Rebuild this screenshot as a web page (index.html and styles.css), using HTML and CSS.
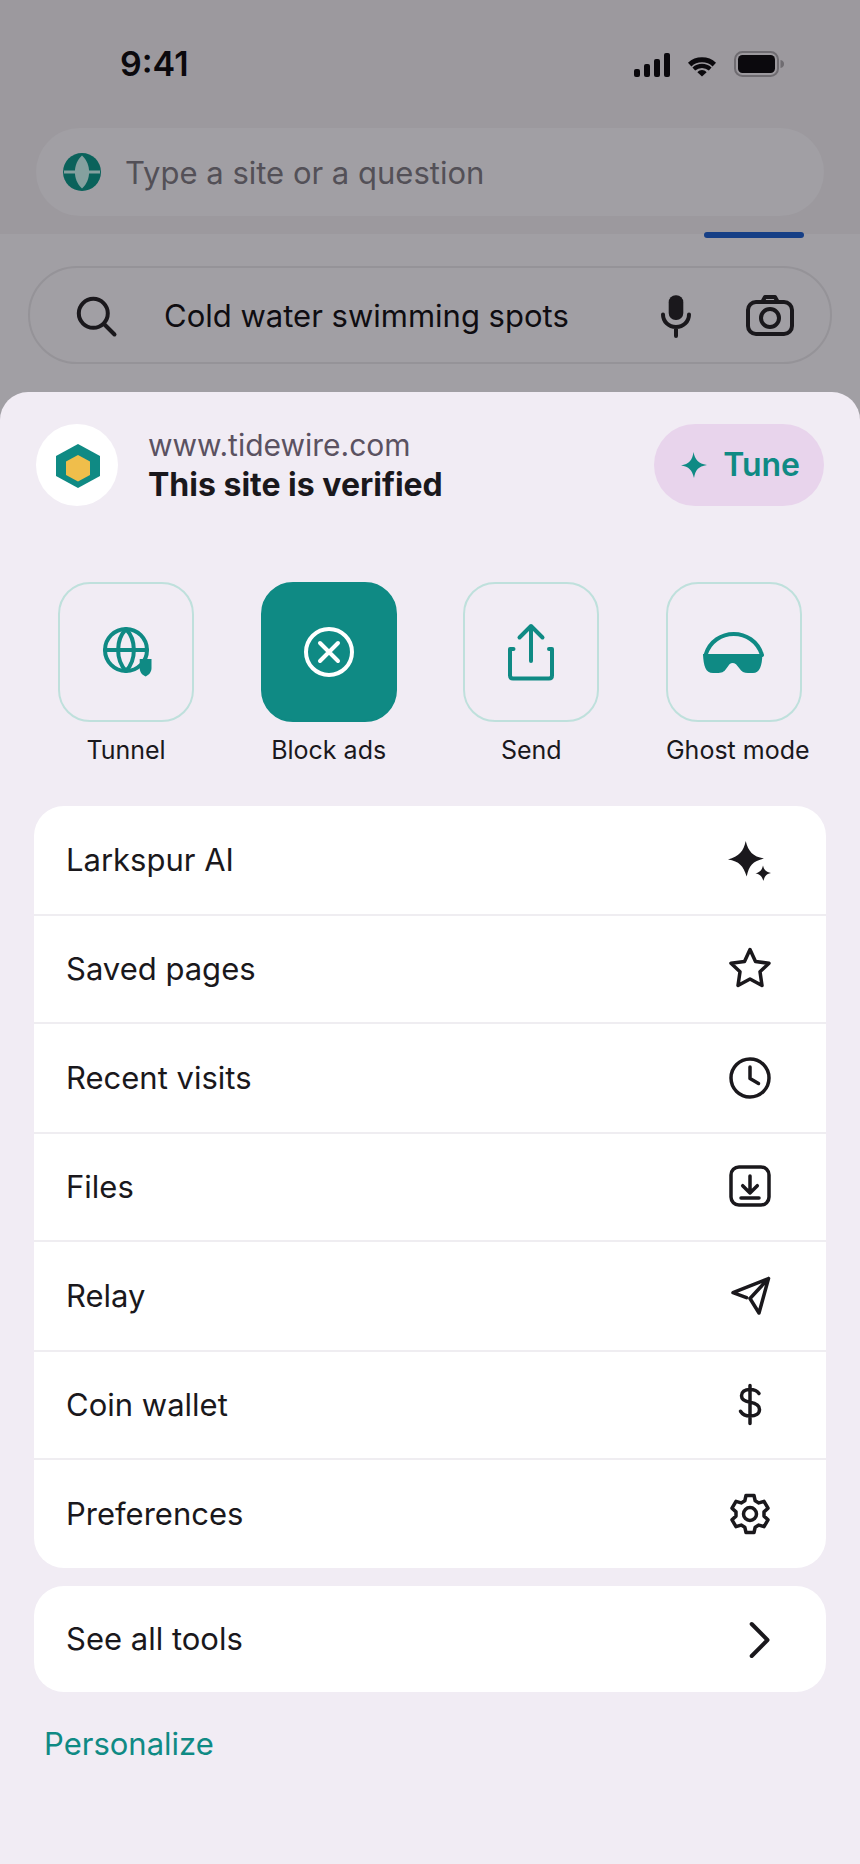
FILE: index.html
```html
<!DOCTYPE html>
<html lang="en">
<head>
<meta charset="utf-8">
<meta name="viewport" content="width=device-width, initial-scale=1">
<title>Browser menu</title>
<link rel="stylesheet" href="styles.css">
</head>
<body>
<header class="top">
  <div class="status">
    <time class="clock">9:41</time>
    <div class="signals">
      <svg width="36" height="26" viewBox="0 0 36 26" fill="currentColor" aria-hidden="true">
        <rect y="18" width="6" height="8" rx="2"/><rect x="10" y="13" width="6" height="13" rx="2"/><rect x="20" y="8" width="6" height="18" rx="2"/><rect x="30" y="2" width="6" height="24" rx="2"/>
      </svg>
      <svg width="28" height="26" viewBox="0 0 28 26" fill="none" stroke="currentColor" stroke-width="5" aria-hidden="true">
        <path d="M1.700 13.600C8.500 7.200 19.500 7.200 26.300 13.600"/><path d="M5.800 18C10.600 13.900 17.400 13.900 22.200 18" stroke-width="4.200"/>
        <path d="M9.400 21.200C12 18.400 16 18.400 18.600 21.200L14 25.500Z" fill="currentColor" stroke="none"/>
      </svg>
      <svg width="50" height="26" viewBox="0 0 50 26" aria-hidden="true">
        <rect x="1" y="1" width="43" height="24" rx="7.500" fill="none" stroke="#6f6c71" stroke-width="2"/>
        <rect x="4" y="4" width="37" height="18" rx="4.500" fill="currentColor"/>
        <path d="M46.500 9C49 9.500 50 11 50 13S49 16.500 46.500 17Z" fill="#6f6c71"/>
      </svg>
    </div>
  </div>
  <label class="address">
    <svg width="38" height="38" viewBox="0 0 38 38" aria-hidden="true">
      <circle cx="19" cy="19" r="19" fill="#0a625b"/><path d="M19 2.500C28.500 11 28.500 27 19 35.500C9.500 27 9.500 11 19 2.500Z" fill="#85a09f"/><path d="M1 19H37" stroke="#85a09f" stroke-width="3"/>
    </svg>
    <input class="field address-field" type="text" placeholder="Type a site or a question" aria-label="Address">
  </label>
  <div class="progress"></div>
</header>
<section class="page">
  <div class="search">
    <svg class="line" width="48" height="48" viewBox="-2 0 48 48" aria-hidden="true"><circle cx="21.300" cy="22.300" r="14.500"/><path d="M32.500 33.500L42.500 43.500"/></svg>
    <input class="field search-field" type="text" value="Cold water swimming spots" aria-label="Search">
    <button class="plain" type="button" aria-label="Voice search">
      <svg class="line" width="48" height="48" viewBox="0 0 48 48"><rect x="16.700" y="4.300" width="14.600" height="24.700" rx="7" fill="currentColor" stroke="none"/><path d="M11 23.500C11 30.500 16.500 36 24 36S37 30.500 37 23.500M24 36V45"/></svg>
    </button>
    <button class="plain" type="button" aria-label="Image search">
      <svg class="line" width="48" height="48" viewBox="0 0 48 48"><rect x="2" y="11" width="44" height="32" rx="8"/><circle cx="24" cy="27" r="9"/><path d="M16.500 10.500L19 6H29L31.500 10.500"/></svg>
    </button>
  </div>
</section>
<main class="sheet">
  <div class="site">
    <div class="site-logo">
      <svg width="44" height="44" viewBox="-1 -1 44 44" aria-hidden="true"><path d="M22 0L44 12V32L22 44L0 32V12Z" fill="#0f8a84"/><path d="M22 11L34 17.500V31L22 37.500L10 31V17.500Z" fill="#f0be4b"/></svg>
    </div>
    <div class="site-text">
      <p class="site-url">www.tidewire.com</p>
      <h1 class="site-state">This site is verified</h1>
    </div>
    <button class="tune" type="button">
      <svg width="26" height="26" viewBox="0 0 26 26" fill="currentColor" aria-hidden="true"><path d="M12.500 0C14 7.500 17 11.500 26 13C17 14.500 14.500 18 13 26C11 18 8 14.500 0 13.500C8 12 11.500 8 12.500 0Z"/></svg>
      Tune
    </button>
  </div>

  <div class="tiles">
    <button class="tile" type="button">
      <span class="tile-box">
        <svg class="line" width="60" height="60" viewBox="0 0 60 60" aria-hidden="true"><circle cx="30" cy="28" r="21"/><path d="M9 28H51M30 7C19.500 18 19.500 38 30 49C40.500 38 40.500 18 30 7Z"/><path d="M43.700 37H55.500V46C55.500 50 53 53 49.600 54.500C46 53 43.700 50 43.700 46Z" fill="currentColor" stroke="none"/></svg>
      </span>
      <span class="tile-label">Tunnel</span>
    </button>
    <button class="tile" type="button" aria-pressed="true">
      <span class="tile-box tile-box-on">
        <svg class="line" width="60" height="60" viewBox="0 0 60 60" aria-hidden="true"><circle cx="30" cy="30" r="23"/><path d="M21 21L39 39M39 21L21 39"/></svg>
      </span>
      <span class="tile-label">Block ads</span>
    </button>
    <button class="tile" type="button">
      <span class="tile-box">
        <svg class="line" width="60" height="60" viewBox="0 0 60 60" aria-hidden="true"><path d="M30 39V4M18.500 15.500L30 4L41.500 15.500M12.500 27H9V53.500Q9 56.500 12 56.500H48Q51 56.500 51 53.500V27H48"/></svg>
      </span>
      <span class="tile-label">Send</span>
    </button>
    <button class="tile" type="button">
      <span class="tile-box">
        <svg class="line" width="60" height="60" viewBox="0 0 60 60" aria-hidden="true"><path d="M1.500 33C10 5 49.500 5 58 33"/><path d="M-1 32H58.300C58.300 44 55.500 51 49 51H44C40 51 37.500 49.500 35.500 46.500L32 42.300Q28.500 39.500 25.500 42.300L22 47C20 50 17.500 51 13 51H9C1.500 51-0.500 44-1 32Z" fill="currentColor" stroke="none"/></svg>
      </span>
      <span class="tile-label">Ghost mode</span>
    </button>
  </div>

  <ul class="card">
    <li><button class="row" type="button">Larkspur AI
      <svg width="44" height="44" viewBox="0 0 44 44" fill="currentColor" aria-hidden="true"><path d="M17.700 3C20.500 13.500 24.500 18.500 36 20.500C24.500 23.500 21 27.500 18.700 38.500C15 27.500 11.500 23.500 0 21.500C11 18.500 15.500 13.500 17.700 3Z"/><path d="M35 27.500C36 32 38 34 43 35C38 36.200 36.500 38.500 35.500 43C34 38.500 32 36.200 27.500 35.500C32 34.200 34 32 35 27.500Z"/></svg></button></li>
    <li><button class="row" type="button">Saved pages
      <svg class="line thin" width="44" height="44" viewBox="0 0 44 44" aria-hidden="true"><path d="M22 2.500L27.500 14.500L41 16.300L32 24.700L34 38.500L22 32L10 38.500L12 24.700L3 16.300L16.500 14.500Z"/></svg></button></li>
    <li><button class="row" type="button">Recent visits
      <svg class="line thin" width="44" height="44" viewBox="0 0 44 44" aria-hidden="true"><circle cx="22" cy="22" r="19"/><path d="M22 11V22.500L30.500 27.500"/></svg></button></li>
    <li><button class="row" type="button">Files
      <svg class="line thin" width="44" height="44" viewBox="0 0 44 44" aria-hidden="true"><rect x="3" y="2" width="38" height="38" rx="8"/><path d="M22 11V28M14.700 20.700L22 28L29.300 20.700M13 33H31"/></svg></button></li>
    <li><button class="row" type="button">Relay
      <svg class="line thin" width="44" height="44" viewBox="0 0 44 44" aria-hidden="true"><path d="M18.500 23.700L5 18.700L40.500 4.500L31 39L22 24.500L40.500 4.500"/></svg></button></li>
    <li><button class="row" type="button">Coin wallet
      <svg class="line thin" width="44" height="44" viewBox="0 0 44 44" aria-hidden="true"><path d="M22 2.500V40.500M31 10.500C29 7.500 26 6.500 22 6.500C16.500 6.500 13.500 9 13.500 12.800C13.500 17 17 18.500 22 19.300C28 20.300 31.500 22 31.500 26.500C31.500 30.500 28 33 22 33C17.500 33 14.500 31.500 12.500 28.300"/></svg></button></li>
    <li><button class="row" type="button">Preferences
      <svg class="line thin" width="44" height="44" viewBox="-22 -22 44 44" aria-hidden="true"><circle r="6.500"/><path d="M-5.200-13.200L-4-18.500H4L5.200-13.200L8.800-11.100L14-12.700L18-5.800L14-2.100V2.100L18 5.800L14 12.700L8.800 11.100L5.200 13.200L4 18.500H-4L-5.200 13.200L-8.800 11.100L-14 12.700L-18 5.800L-14 2.100V-2.100L-18-5.800L-14-12.700L-8.800-11.100Z"/></svg></button></li>
  </ul>

  <div class="card">
    <button class="row" type="button">See all tools
      <svg class="line" width="44" height="44" viewBox="0 0 44 44" aria-hidden="true"><path d="M23.700 7L39.500 23L23.700 39"/></svg></button>
  </div>

  <a class="personalize" href="#">Personalize</a>
</main>
</body>
</html>
```
FILE: styles.css
```css
* {
  box-sizing: border-box;
}

body {
  margin: 0;
  min-height: 100vh;
  display: flex;
  flex-direction: column;
  background: #a19fa4;
  color: #1a181c;
  font-family: Inter, "Liberation Sans", sans-serif;
  font-size: 31px;
  line-height: 40px;
}

button,
input {
  margin: 0;
  padding: 0;
  border: 0;
  background: none;
  color: inherit;
  font: inherit;
}

button {
  cursor: pointer;
}

svg {
  display: block;
  flex: none;
  overflow: visible;
}

.line {
  fill: none;
  stroke: currentColor;
  stroke-width: 4;
  stroke-linecap: round;
  stroke-linejoin: round;
}

.thin {
  stroke-width: 3.5;
}

.top {
  position: relative;
  padding: 0 36px 18px;
  background: #9c999e;
}

.status {
  display: flex;
  align-items: center;
  justify-content: space-between;
  height: 128px;
  padding: 0 40px 0 84px;
  color: #0b090d;
}

.clock {
  font-size: 34px;
  font-weight: 600;
}

.signals {
  display: flex;
  gap: 18px;
}

.address {
  display: flex;
  align-items: center;
  gap: 24px;
  height: 88px;
  padding: 0 27px;
  border-radius: 44px;
  background: #a19fa4;
}

.field {
  flex: 1;
  min-width: 0;
  height: 48px;
}

.address-field::placeholder {
  color: #535057;
  opacity: 1;
}

.progress {
  position: absolute;
  right: 56px;
  bottom: -4px;
  width: 100px;
  height: 6px;
  border-radius: 3px;
  background: #163f86;
}

.page {
  padding: 32px 28px 0;
}

.search {
  display: flex;
  align-items: center;
  gap: 46px;
  height: 98px;
  padding: 0 36px 0 40px;
  border: 2px solid #959398;
  border-radius: 49px;
}

.search-field {
  color: #0f0d11;
}

.sheet {
  flex: 1;
  margin-top: 28px;
  padding: 32px 34px;
  border-radius: 28px 28px 0 0;
  background: #f1ecf4;
}

.site {
  display: flex;
  align-items: center;
  padding: 0 2px;
}

.site-logo {
  display: flex;
  align-items: center;
  justify-content: center;
  width: 82px;
  height: 82px;
  border-radius: 50%;
  background: #fff;
}

.site-text {
  flex: 1;
  padding-left: 30px;
}

.site-url,
.site-state {
  margin: 0;
  line-height: 40px;
}

.site-url {
  color: #5b5261;
  font-size: 30px;
}

.site-state {
  font-size: 32px;
  font-weight: 700;
}

.tune {
  display: flex;
  align-items: center;
  gap: 16px;
  height: 82px;
  padding: 0 24px 0 27px;
  border-radius: 41px;
  background: #e8d4ec;
  color: #0f8a84;
  font-size: 32px;
  font-weight: 600;
}

.tiles {
  display: flex;
  justify-content: space-between;
  padding: 76px 24px 40px;
}

.tile {
  width: 136px;
}

.tile-box {
  display: flex;
  align-items: center;
  justify-content: center;
  height: 140px;
  border: 2px solid #bfe0dc;
  border-radius: 32px;
  color: #0f8a84;
}

.tile-box-on {
  border-color: #0f8a84;
  background: #0f8a84;
  color: #fff;
}

.tile-label {
  display: block;
  padding-top: 12px;
  font-size: 25px;
  line-height: 32px;
  white-space: nowrap;
}

.card {
  margin: 0 0 18px;
  padding: 0;
  border-radius: 30px;
  background: #fff;
  list-style: none;
}

.card li + li {
  border-top: 2px solid #efedf1;
}

.row {
  display: flex;
  align-items: center;
  justify-content: space-between;
  width: 100%;
  min-height: 106px;
  padding: 0 54px 0 32px;
  text-align: left;
}

.card li:nth-child(odd) .row {
  min-height: 108px;
}

.personalize {
  display: inline-block;
  padding: 14px 10px;
  color: #0f8a84;
  text-decoration: none;
}
```
